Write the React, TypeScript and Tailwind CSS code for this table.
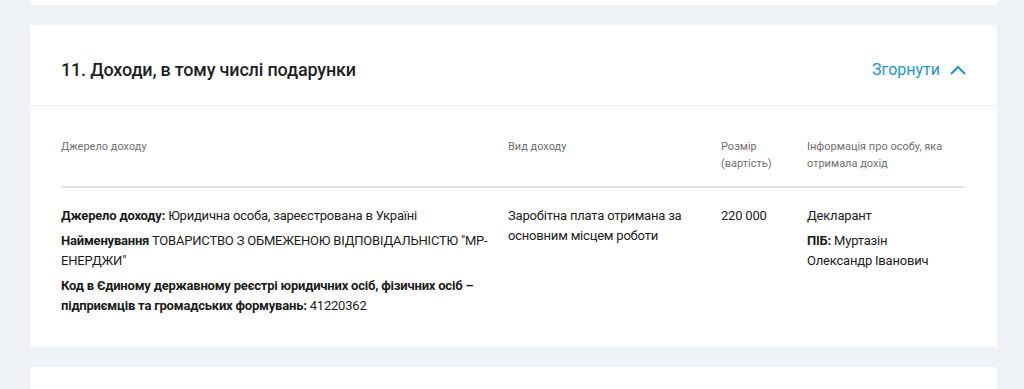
import React, { useState } from 'react';

const columns: string[] = [
  'Джерело доходу',
  'Вид доходу',
  'Розмір (вартість)',
  'Інформація про особу, яка отримала дохід',
];

const App = () => {
  const [isOpen, setIsOpen] = useState<boolean>(true);

  return (
    <div className="w-full h-[389px] overflow-hidden bg-[#eef1f5] px-[30px] pr-[27px] font-['Roboto',sans-serif] text-[#222]">
      <div className="h-[5px] bg-white" />

      <div className="mt-[20px] bg-white">
        <div className="h-[81px] pt-[8px] flex items-center justify-between pl-[31px] pr-[31px] border-b border-[#eef0f2]">
          <h2 className="text-[18px] font-medium tracking-[-0.18px] text-[#1f1f1f]">11. Доходи, в тому числі подарунки</h2>
          <button
            className="flex items-center gap-[10px] text-[16px] text-[#1d95d7] pt-[2px]"
            onClick={() => setIsOpen(!isOpen)}
          >
            Згорнути
            <svg width="16" height="10" viewBox="0 0 16 10" fill="none">
              <path d="M1 9L8 2L15 9" stroke="#1d95d7" strokeWidth="2" />
            </svg>
          </button>
        </div>

        {isOpen && (
          <div className="pl-[31px] pr-[32px] pt-[32px] pb-[31px]">
            <div className="grid grid-cols-[447px_213px_86px_1fr] text-[11px] leading-[17px] text-[#6f6f6f] pb-[14px] border-b-2 border-[#e2e2e2]">
              {columns.map((col: string, i: number) => (
                <div key={col} className={i === 2 ? 'pr-[10px]' : 'pr-[20px]'}>
                  {col}
                </div>
              ))}
            </div>

            <div className="grid grid-cols-[447px_213px_86px_1fr] text-[13px] leading-[20px] tracking-[-0.2px] text-[#1c1c1c] pt-[18px]">
              <div className="flex flex-col gap-[5px]">
                <p>
                  <span className="font-bold">Джерело доходу:</span> Юридична особа, зареєстрована в Україні
                </p>
                <p>
                  <span className="font-bold">Найменування</span> ТОВАРИСТВО З ОБМЕЖЕНОЮ ВІДПОВІДАЛЬНІСТЮ "МР-ЕНЕРДЖИ"
                </p>
                <p>
                  <span className="font-bold">Код в Єдиному державному реєстрі юридичних осіб, фізичних осіб – підприємців та громадських формувань:</span> 41220362
                </p>
              </div>
              <div className="pr-[20px]">Заробітна плата отримана за основним місцем роботи</div>
              <div>220 000</div>
              <div className="pr-[20px] flex flex-col gap-[5px]">
                <p>Декларант</p>
                <p>
                  <span className="font-bold">ПІБ:</span> Муртазін Олександр Іванович
                </p>
              </div>
            </div>
          </div>
        )}
      </div>

      <div className="mt-[20px] h-[40px] bg-white" />
    </div>
  );
};

export default App;
